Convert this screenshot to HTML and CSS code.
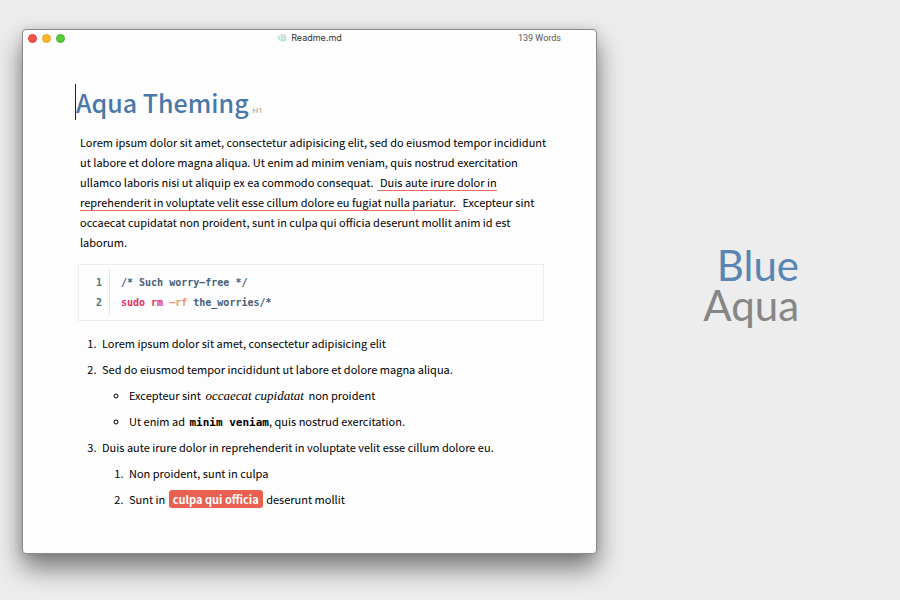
FILE: index.html
```html
<!DOCTYPE html>
<html lang="en">
<head>
<meta charset="utf-8">
<title>Readme.md</title>
<link rel="stylesheet" href="styles.css">
</head>
<body>
<main class="window">
  <header class="titlebar">
    <div class="controls">
      <button class="dot close" aria-label="Close"></button>
      <button class="dot minimize" aria-label="Minimize"></button>
      <button class="dot zoom" aria-label="Zoom"></button>
    </div>
    <div class="filename">
      <svg class="file-icon" viewBox="0 0 20 20" aria-hidden="true">
        <path d="M6 3l11-1 2 6-11 2z" fill="#eadfce"/>
        <path d="M8 8l11-1-2 9-9 1z" fill="#a9e6dc"/>
        <path d="M9 10l7-1v3l-7 1z" fill="#dff7f1"/>
        <path d="M0 4l6 1 2 11-5-1z" fill="#c9f1ea"/>
        <path d="M2 6l4 8" stroke="#8fdccf" fill="none"/>
      </svg>
      <span>Readme.md</span>
    </div>
    <div class="count">139 Words</div>
  </header>
  <article class="document">
    <h1 class="title">Aqua Theming<small class="level">H1</small></h1>
    <p class="paragraph">Lorem ipsum dolor sit amet, consectetur adipisicing elit, sed do eiusmod tempor incididunt ut labore et dolore magna aliqua. Ut enim ad minim veniam, quis nostrud exercitation ullamco laboris nisi ut aliquip ex ea commodo consequat. <u class="marked">Duis aute irure dolor in reprehenderit in voluptate velit esse cillum dolore eu fugiat nulla pariatur.</u> Excepteur sint occaecat cupidatat non proident, sunt in culpa qui officia deserunt mollit anim id est laborum.</p>
    <div class="code">
      <div class="gutter"><span>1</span><span>2</span></div>
      <pre class="lines"><code>/* Such worry–free */
<b class="command">sudo rm</b> <b class="flag">–rf</b> the_worries/*</code></pre>
    </div>
    <ol class="list">
      <li>Lorem ipsum dolor sit amet, consectetur adipisicing elit</li>
      <li>Sed do eiusmod tempor incididunt ut labore et dolore magna aliqua.
        <ul class="sublist bullets">
          <li>Excepteur sint <em class="emphasis">occaecat cupidatat</em> non proident</li>
          <li>Ut enim ad <strong class="mono">minim veniam</strong>, quis nostrud exercitation.</li>
        </ul>
      </li>
      <li>Duis aute irure dolor in reprehenderit in voluptate velit esse cillum dolore eu.
        <ol class="sublist">
          <li>Non proident, sunt in culpa</li>
          <li>Sunt in <mark class="tag">culpa qui officia</mark> deserunt mollit</li>
        </ol>
      </li>
    </ol>
  </article>
</main>
<aside class="brand">
  <span class="brand-blue">Blue</span>
  <span class="brand-aqua">Aqua</span>
</aside>
</body>
</html>
```
FILE: styles.css
```css
* {
  box-sizing: border-box;
}

body {
  margin: 0;
  min-height: 100vh;
  padding: 29px 22px 46px;
  display: grid;
  grid-template-columns: 1fr 281px;
  background: #ededed;
  color: #000;
  font: 400 11px/20px "Noto Sans CJK SC", "Noto Sans", sans-serif;
}

.window {
  background: #fdfdfd;
  border: 1px solid #8a8a8a;
  border-radius: 4px;
  box-shadow: 0 14px 26px rgba(0, 0, 0, 0.5), 0 0 10px rgba(0, 0, 0, 0.1);
}

.titlebar {
  display: grid;
  grid-template-columns: 1fr auto 1fr;
  align-items: center;
  height: 16px;
  padding: 0 35px 0 5px;
  color: #555;
  font: 9px/16px Roboto, "Liberation Sans", sans-serif;
}

.controls {
  display: flex;
  gap: 5px;
}

.dot {
  width: 9px;
  height: 9px;
  padding: 0;
  border: 1px solid;
  border-radius: 50%;
}

.close {
  background: #f2504b;
  border-color: #e0443e;
}

.minimize {
  background: #f9b82a;
  border-color: #e6a522;
}

.zoom {
  background: #58cb3d;
  border-color: #45b52c;
}

.filename {
  display: flex;
  align-items: center;
  gap: 4px;
  margin-left: 30px;
  color: #333;
  font-family: Inter, sans-serif;
}

.file-icon {
  width: 10px;
  height: 10px;
}

.count {
  text-align: right;
}

.document {
  padding: 38px 48px 24px 52px;
}

.title {
  margin: 0 0 12px;
  border-left: 1px solid #222;
  color: #4a78a8;
  font-size: 25px;
  font-weight: 500;
  line-height: 36px;
}

.level {
  margin-left: 4px;
  color: #999;
  font: 8px/8px Roboto, sans-serif;
}

.paragraph {
  margin: 0 0 12px 5px;
}

.marked {
  margin: 0 1px;
  padding: 0 3px;
  border-bottom: 1px solid #ee6a5f;
  text-decoration: none;
}

.code {
  display: flex;
  margin: 0 4px 12px 3px;
  padding: 4px 0 5px;
  border: 1px solid #eceeee;
  color: #46607a;
  font: 700 10px/20px "DejaVu Sans Mono", monospace;
}

.gutter {
  display: flex;
  flex-direction: column;
  width: 31px;
  padding: 4px 7px 2px 0;
  border-right: 1px solid #e2e5e5;
  color: #47796f;
  text-align: right;
}

.lines {
  margin: 0;
  padding: 4px 11px 2px;
  font: inherit;
}

.lines code {
  font: inherit;
}

.command {
  color: #e0325f;
}

.flag {
  color: #f0986a;
}

.list {
  margin: 0;
  padding-left: 24px;
}

.list li {
  margin-bottom: 6px;
  padding-left: 3px;
}

.sublist {
  margin: 6px 0 0;
  padding-left: 24px;
}

.list .bullets {
  padding-left: 27px;
}

.list .bullets li {
  padding-left: 0;
}

.emphasis {
  padding: 0 2px;
  font: italic 400 13px/13px "Liberation Serif", serif;
}

.mono {
  margin-left: 2px;
  font: 700 11px/11px "DejaVu Sans Mono", monospace;
}

.tag {
  margin: 0 1px;
  padding: 1px 4px;
  border-radius: 3px;
  background: #e95f50;
  color: #fff;
  font-weight: 700;
}

.brand {
  display: flex;
  flex-direction: column;
  justify-content: center;
  align-items: flex-end;
  padding: 0 79px 14px 0;
  font: 400 42px/40px Lato, sans-serif;
}

.brand-blue {
  color: #5a84b4;
}

.brand-aqua {
  color: #868686;
}
```
